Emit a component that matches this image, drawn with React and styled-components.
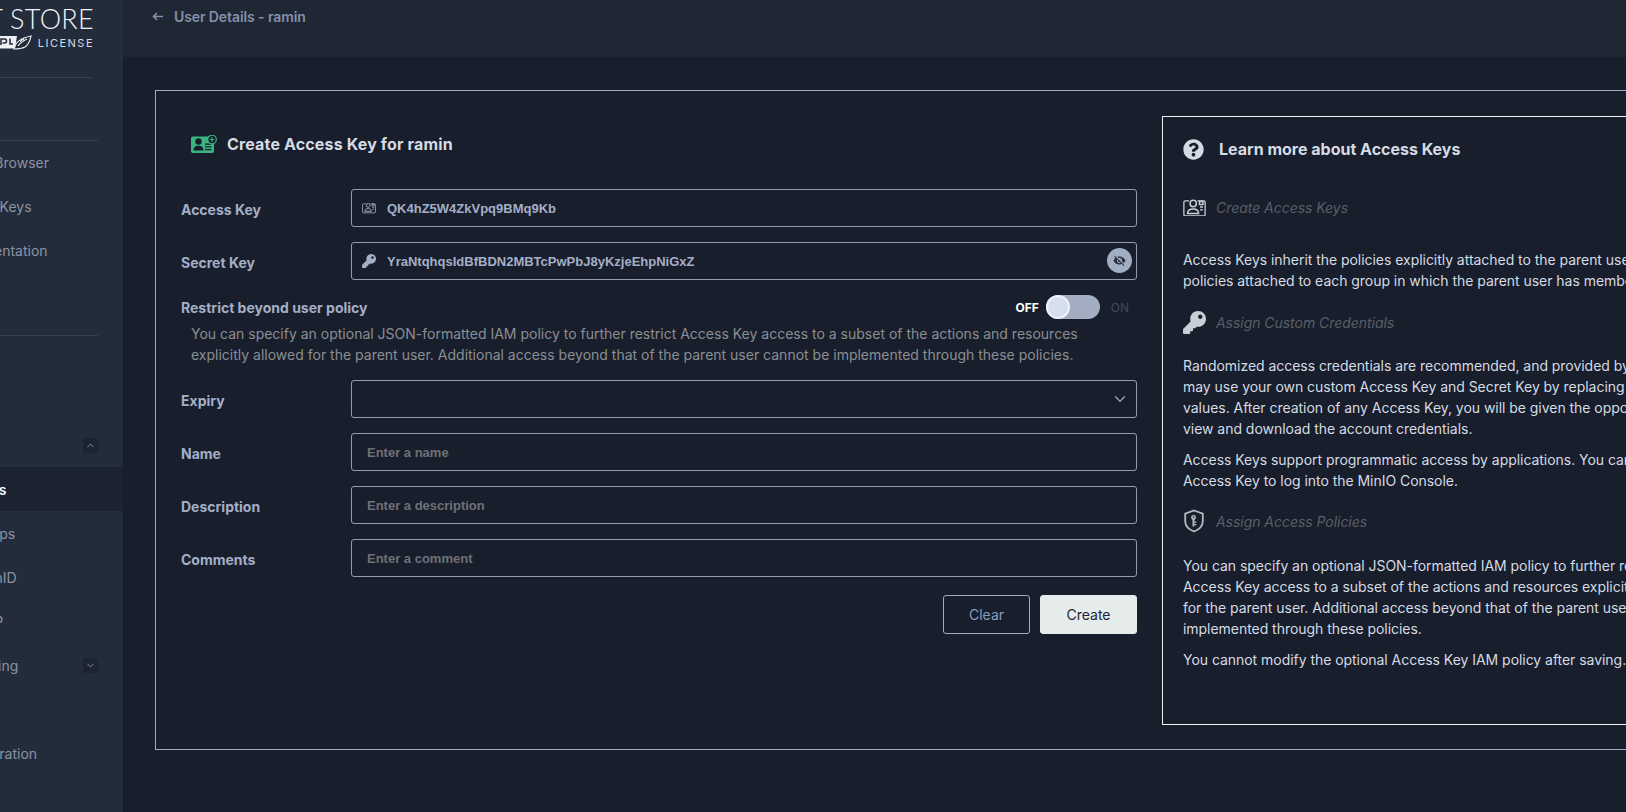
import styled, { createGlobalStyle } from "styled-components";
import { FaKey, FaQuestionCircle } from "react-icons/fa";
import { MdVisibilityOff } from "react-icons/md";
import { ChevronDown, ChevronUp } from "lucide-react";

const GlobalStyle = createGlobalStyle`
  html, body {
    margin: 0;
    padding: 0;
    background: #181e2b;
    overflow: hidden;
  }
  * {
    box-sizing: border-box;
  }
  body {
    font-family: Inter, "Liberation Sans", sans-serif;
    font-size: 14px;
  }
`;

const Page = styled.div`
  display: flex;
  width: 1626px;
  height: 812px;
  overflow: hidden;
  background: #181e2b;
`;

const Sidebar = styled.aside`
  flex: 0 0 123px;
  overflow: hidden;
  background: #232c3b;
`;

const SidebarInner = styled.div`
  width: 250px;
  margin-left: -127px;
`;

const Logo = styled.div`
  height: 77px;
  padding: 5px 29px 0 0;
  display: flex;
  flex-direction: column;
  align-items: flex-end;
  color: #f2f4f7;
`;

const LogoTitle = styled.div`
  font-family: Lato, sans-serif;
  font-weight: 300;
  font-size: 27px;
  line-height: 28px;
  letter-spacing: 0.3px;
  white-space: nowrap;
`;

const LogoSub = styled.div`
  display: flex;
  align-items: center;
  gap: 6px;
  margin-top: 1px;
  font-size: 11px;
  line-height: 16px;
  letter-spacing: 1.5px;
  color: #d7dbe2;
`;

const Divider = styled.div`
  height: 1px;
  margin-right: ${(props) => props.$right}px;
  background: #373f4e;
`;

const Spacer = styled.div`
  height: ${(props) => props.$height}px;
`;

const NavGroup = styled.nav`
  margin-top: -1px;
`;

const NavRow = styled.div`
  display: flex;
  align-items: center;
  justify-content: space-between;
  height: 44px;
  padding: 0 25px 0 ${(props) => (props.$sub ? 94 : 74)}px;
  white-space: nowrap;
  background: ${(props) => (props.$active ? "#1b2230" : "transparent")};
  color: ${(props) => (props.$active ? "#ffffff" : "#8a93a3")};
  font-weight: ${(props) => (props.$active ? 600 : 400)};
`;

const ChevronBox = styled.span`
  display: flex;
  align-items: center;
  justify-content: center;
  width: 15px;
  height: 15px;
  border-radius: 2px;
  background: #1c2432;
  color: #8a93a3;
`;

const Main = styled.main`
  flex: 1;
  min-width: 0;
  overflow: hidden;
`;

const Header = styled.header`
  display: flex;
  align-items: flex-start;
  gap: 11px;
  height: 57px;
  padding: 8px 0 0 29px;
  background: #1f2634;
  color: #8590a8;
  font-weight: 600;
  line-height: 17px;
  letter-spacing: -0.1px;
`;

const Content = styled.div`
  padding: 33px 0 0 32px;
`;

const Card = styled.section`
  display: flex;
  gap: 25px;
  width: 1700px;
  height: 660px;
  padding: 25px 25px 24px 25px;
  border: 1px solid #a3abba;
`;

const FormColumn = styled.div`
  flex: 0 0 956px;
`;

const FormTitle = styled.h2`
  display: flex;
  align-items: center;
  gap: 10px;
  height: 36px;
  margin: 10px 0 27px;
  padding-left: 10px;
  color: #d5dbe4;
  font-size: 16px;
  font-weight: 700;
  letter-spacing: 0.15px;
`;

const FieldRow = styled.div`
  display: flex;
  align-items: center;
  height: 38px;
  margin-bottom: ${(props) => props.$gap ?? 15}px;
`;

const Label = styled.label`
  flex: 0 0 170px;
  padding-top: 3px;
  color: #a4afc7;
  font-weight: 700;
`;

const InputBox = styled.div`
  position: relative;
  flex: 1;
  display: flex;
  align-items: center;
  height: 38px;
  padding: 0 15px;
  border: 1px solid #939bad;
  border-radius: 3px;
  color: #a4afc7;
  font-family: "Liberation Sans", Arial, sans-serif;
  font-size: 13px;
  font-weight: 700;
`;

const InputIcon = styled.span`
  display: flex;
  align-items: center;
  justify-content: center;
  width: 15px;
  margin: 0 11px 0 -6px;
  color: #a4afc7;
`;

const Placeholder = styled.span`
  color: #6f7176;
`;

const EyeButton = styled.span`
  position: absolute;
  right: 4px;
  top: 5px;
  display: flex;
  align-items: center;
  justify-content: center;
  width: 25px;
  height: 25px;
  border-radius: 50%;
  background: #a3adc2;
  color: #232c3b;
`;

const SelectChevron = styled.span`
  position: absolute;
  right: 7px;
  top: 9px;
  display: flex;
  color: #a4afc7;
`;

const ToggleRow = styled.div`
  display: flex;
  align-items: center;
  justify-content: space-between;
  height: 24px;
`;

const ToggleLabel = styled.span`
  color: #a4afc7;
  font-weight: 700;
`;

const ToggleGroup = styled.div`
  display: flex;
  align-items: center;
  padding-right: 8px;
  font-size: 12px;
  font-weight: 700;
`;

const ToggleText = styled.span`
  color: ${(props) => (props.$on ? "#ffffff" : "#414a5b")};
  font-weight: ${(props) => (props.$on ? 700 : 400)};
`;

const Track = styled.span`
  display: flex;
  align-items: center;
  width: 54px;
  height: 24px;
  margin: 0 11px 0 7px;
  border-radius: 12px;
  background: #a3adc2;
`;

const Knob = styled.span`
  width: 24px;
  height: 24px;
  border-radius: 50%;
  background: #d6dff0;
  border: 2px solid #eef1f6;
`;

const Helper = styled.p`
  margin: 4px 0 15px 10px;
  color: #8b8e94;
  line-height: 21px;
  white-space: nowrap;
`;

const Buttons = styled.div`
  display: flex;
  justify-content: flex-end;
  gap: 10px;
`;

const Button = styled.button`
  height: 39px;
  width: ${(props) => (props.$primary ? 97 : 87)}px;
  border-radius: 3px;
  border: 1px solid ${(props) => (props.$primary ? "#e6ebeb" : "#a3abba")};
  background: ${(props) => (props.$primary ? "#e6ebeb" : "transparent")};
  color: ${(props) => (props.$primary ? "#1e2533" : "#8a9dbc")};
  font-family: inherit;
  font-size: 14px;
`;

const HelpPanel = styled.div`
  flex: 0 0 700px;
  height: 100%;
  padding: 20px;
  border: 1px solid #eef0f3;
  color: #d5dbe4;
  line-height: 21px;
  letter-spacing: -0.04px;
  white-space: nowrap;
`;

const HelpTitle = styled.h3`
  display: flex;
  align-items: center;
  gap: 15px;
  height: 24px;
  margin: 0 0 34px;
  color: #d5dbe4;
  font-size: 16px;
  font-weight: 700;
  letter-spacing: 0;
`;

const HelpHeading = styled.div`
  display: flex;
  align-items: center;
  gap: 10px;
  height: 24px;
  margin: ${(props) => props.$top}px 0 ${(props) => props.$bottom}px;
  color: #5b5f67;
  font-style: italic;
`;

const HelpIcon = styled.span`
  display: flex;
  width: 23px;
  color: #c9ced6;
`;

const Para = styled.p`
  margin: 0 0 10px;
`;

function IdCardIcon({ size }) {
  return (
    <svg width={size} height={size * 0.82} viewBox="0 0 23 19" fill="none" stroke="currentColor">
      <path d="M6 3H2a1.2 1.2 0 0 0-1.2 1.2v12.6A1.2 1.2 0 0 0 2 18h19a1.2 1.2 0 0 0 1.2-1.2V4.200A1.200 1.200 0 0 0 21 3h-6.500" strokeWidth="1.300" />
      <circle cx="10.200" cy="5.500" r="3.200" strokeWidth="1.500" />
      <path d="M4.500 15.500c0-3 2-4.500 5.700-4.500s5.400 1.500 5.400 4.500z" strokeWidth="1.500" />
      <path d="M16.500 3.500h3.500v3h-3.500zM17 9h3M17 12h3" strokeWidth="1.400" />
    </svg>
  );
}

function NewKeyIcon() {
  return (
    <svg width="26" height="18" viewBox="0 0 26 18">
      <path d="M2 1.500h19a2 2 0 0 1 2 2v12.500a2 2 0 0 1-2 2H2a2 2 0 0 1-2-2V3.500a2 2 0 0 1 2-2z" fill="#3bb57f" />
      <circle cx="7.500" cy="6.500" r="3.200" fill="#181e2b" />
      <path d="M2.500 15.500c0-3.500 2-4.800 5-4.800s5 1.300 5 4.800z" fill="#181e2b" />
      <path d="M14 8.500h6.500v1.300H14zM14 11.200h6.500v1.300H14zM14 13.900h6.500v1.300H14z" fill="#181e2b" />
      <circle cx="21" cy="4.500" r="4.300" fill="#181e2b" stroke="#3bb57f" strokeWidth="1.200" />
      <path d="M21 2.200v4.600M18.700 4.500h4.600" stroke="#3bb57f" strokeWidth="1.200" />
    </svg>
  );
}

function ShieldKeyIcon() {
  return (
    <svg width="22" height="24" viewBox="0 0 22 24" fill="none">
      <path d="M11 1.500l8.800 3.200v7.300c0 4.800-3.500 8.400-8.800 10.500C5.700 20.400 2.200 16.800 2.200 12V4.700z" stroke="#b5bac1" strokeWidth="1.800" />
      <circle cx="10.500" cy="8.500" r="2.400" fill="#b5bac1" />
      <circle cx="10.500" cy="8" r="0.800" fill="#181e2b" />
      <path d="M9.500 10h2v7.500h-2z" fill="#b5bac1" />
      <path d="M11.500 12.500h1.800v1.300h-1.800zM11.500 15h1.800v1.300h-1.800z" fill="#b5bac1" />
    </svg>
  );
}

function LicenseMark() {
  return (
    <svg width="33" height="17" viewBox="0 0 33 17">
      <path d="M0 2h18l-2 12.500H0z" fill="#eef0f3" />
      <path d="M2 11V5h3.500a2 2 0 0 1 0 4H3.500M11 4.500V10h3" fill="none" stroke="#232c3b" strokeWidth="1.600" />
      <path d="M15 15c1-6 7-11 17-13-1 5-3 9-6 11-3 1.500-7 2-11 2z" fill="none" stroke="#eef0f3" strokeWidth="1.200" />
      <path d="M19 12c2-3 5-5 9-7M21 7.500c1-1 3-2 4-2" fill="none" stroke="#eef0f3" strokeWidth="1.200" />
    </svg>
  );
}

function ArrowBack() {
  return (
    <svg width="11" height="17" viewBox="0 0 11 17" fill="none" stroke="#8590a8" strokeWidth="1.600">
      <path d="M11 8.500H1.500M5 5L1.500 8.500 5 12" />
    </svg>
  );
}

export default function App() {
  return (
    <>
      <GlobalStyle />
      <Page>
        <Sidebar>
          <SidebarInner>
            <Logo>
              <LogoTitle>OBJECT STORE</LogoTitle>
              <LogoSub>
                <LicenseMark />
                LICENSE
              </LogoSub>
            </Logo>
            <Divider $right={30} />
            <Spacer $height={62} />
            <Divider $right={25} />
            <NavGroup>
              <NavRow>Object Browser</NavRow>
              <NavRow>Access Keys</NavRow>
              <NavRow>Documentation</NavRow>
            </NavGroup>
            <Spacer $height={63} />
            <Divider $right={25} />
            <Spacer $height={87} />
            <NavRow>
              Identity
              <ChevronBox>
                <ChevronUp size={11} />
              </ChevronBox>
            </NavRow>
            <NavRow $sub $active>Users</NavRow>
            <NavRow $sub>Groups</NavRow>
            <NavRow $sub>OpenID</NavRow>
            <NavRow $sub>LDAP</NavRow>
            <NavRow>
              Monitoring
              <ChevronBox>
                <ChevronDown size={11} />
              </ChevronBox>
            </NavRow>
            <Spacer $height={44} />
            <NavRow>Configuration</NavRow>
          </SidebarInner>
        </Sidebar>
        <Main>
          <Header>
            <ArrowBack />
            User Details - ramin
          </Header>
          <Content>
            <Card>
              <FormColumn>
                <FormTitle>
                  <NewKeyIcon />
                  Create Access Key for ramin
                </FormTitle>
                <FieldRow>
                  <Label>Access Key</Label>
                  <InputBox>
                    <InputIcon>
                      <IdCardIcon size={14} />
                    </InputIcon>
                    QK4hZ5W4ZkVpq9BMq9Kb
                  </InputBox>
                </FieldRow>
                <FieldRow>
                  <Label>Secret Key</Label>
                  <InputBox>
                    <InputIcon>
                      <FaKey size={14} />
                    </InputIcon>
                    YraNtqhqsIdBfBDN2MBTcPwPbJ8yKzjeEhpNiGxZ
                    <EyeButton>
                      <MdVisibilityOff size={13} />
                    </EyeButton>
                  </InputBox>
                </FieldRow>
                <ToggleRow>
                  <ToggleLabel>Restrict beyond user policy</ToggleLabel>
                  <ToggleGroup>
                    <ToggleText $on>OFF</ToggleText>
                    <Track>
                      <Knob />
                    </Track>
                    <ToggleText>ON</ToggleText>
                  </ToggleGroup>
                </ToggleRow>
                <Helper>
                  You can specify an optional JSON-formatted IAM policy to further restrict Access Key access to a subset of the actions and resources
                  <br />
                  explicitly allowed for the parent user. Additional access beyond that of the parent user cannot be implemented through these policies.
                </Helper>
                <FieldRow>
                  <Label>Expiry</Label>
                  <InputBox>
                    <SelectChevron>
                      <ChevronDown size={18} strokeWidth={1.5} />
                    </SelectChevron>
                  </InputBox>
                </FieldRow>
                <FieldRow>
                  <Label>Name</Label>
                  <InputBox>
                    <Placeholder>Enter a name</Placeholder>
                  </InputBox>
                </FieldRow>
                <FieldRow>
                  <Label>Description</Label>
                  <InputBox>
                    <Placeholder>Enter a description</Placeholder>
                  </InputBox>
                </FieldRow>
                <FieldRow $gap={18}>
                  <Label>Comments</Label>
                  <InputBox>
                    <Placeholder>Enter a comment</Placeholder>
                  </InputBox>
                </FieldRow>
                <Buttons>
                  <Button>Clear</Button>
                  <Button $primary>Create</Button>
                </Buttons>
              </FormColumn>
              <HelpPanel>
                <HelpTitle>
                  <FaQuestionCircle size={21} />
                  Learn more about Access Keys
                </HelpTitle>
                <HelpHeading $top={0} $bottom={30}>
                  <HelpIcon>
                    <IdCardIcon size={23} />
                  </HelpIcon>
                  Create Access Keys
                </HelpHeading>
                <Para>
                  Access Keys inherit the policies explicitly attached to the parent user, and the
                  <br />
                  policies attached to each group in which the parent user has membership.
                </Para>
                <HelpHeading $top={19} $bottom={21}>
                  <HelpIcon>
                    <FaKey size={23} />
                  </HelpIcon>
                  Assign Custom Credentials
                </HelpHeading>
                <Para>
                  Randomized access credentials are recommended, and provided by default. You
                  <br />
                  may use your own custom Access Key and Secret Key by replacing the default
                  <br />
                  values. After creation of any Access Key, you will be given the opportunity to
                  <br />
                  view and download the account credentials.
                </Para>
                <Para>
                  Access Keys support programmatic access by applications. You cannot use a
                  <br />
                  Access Key to log into the MinIO Console.
                </Para>
                <HelpHeading $top={18} $bottom={22}>
                  <HelpIcon>
                    <ShieldKeyIcon />
                  </HelpIcon>
                  Assign Access Policies
                </HelpHeading>
                <Para>
                  You can specify an optional JSON-formatted IAM policy to further restrict
                  <br />
                  Access Key access to a subset of the actions and resources explicitly allowed
                  <br />
                  for the parent user. Additional access beyond that of the parent user cannot be
                  <br />
                  implemented through these policies.
                </Para>
                <Para>You cannot modify the optional Access Key IAM policy after saving.</Para>
              </HelpPanel>
            </Card>
          </Content>
        </Main>
      </Page>
    </>
  );
}
